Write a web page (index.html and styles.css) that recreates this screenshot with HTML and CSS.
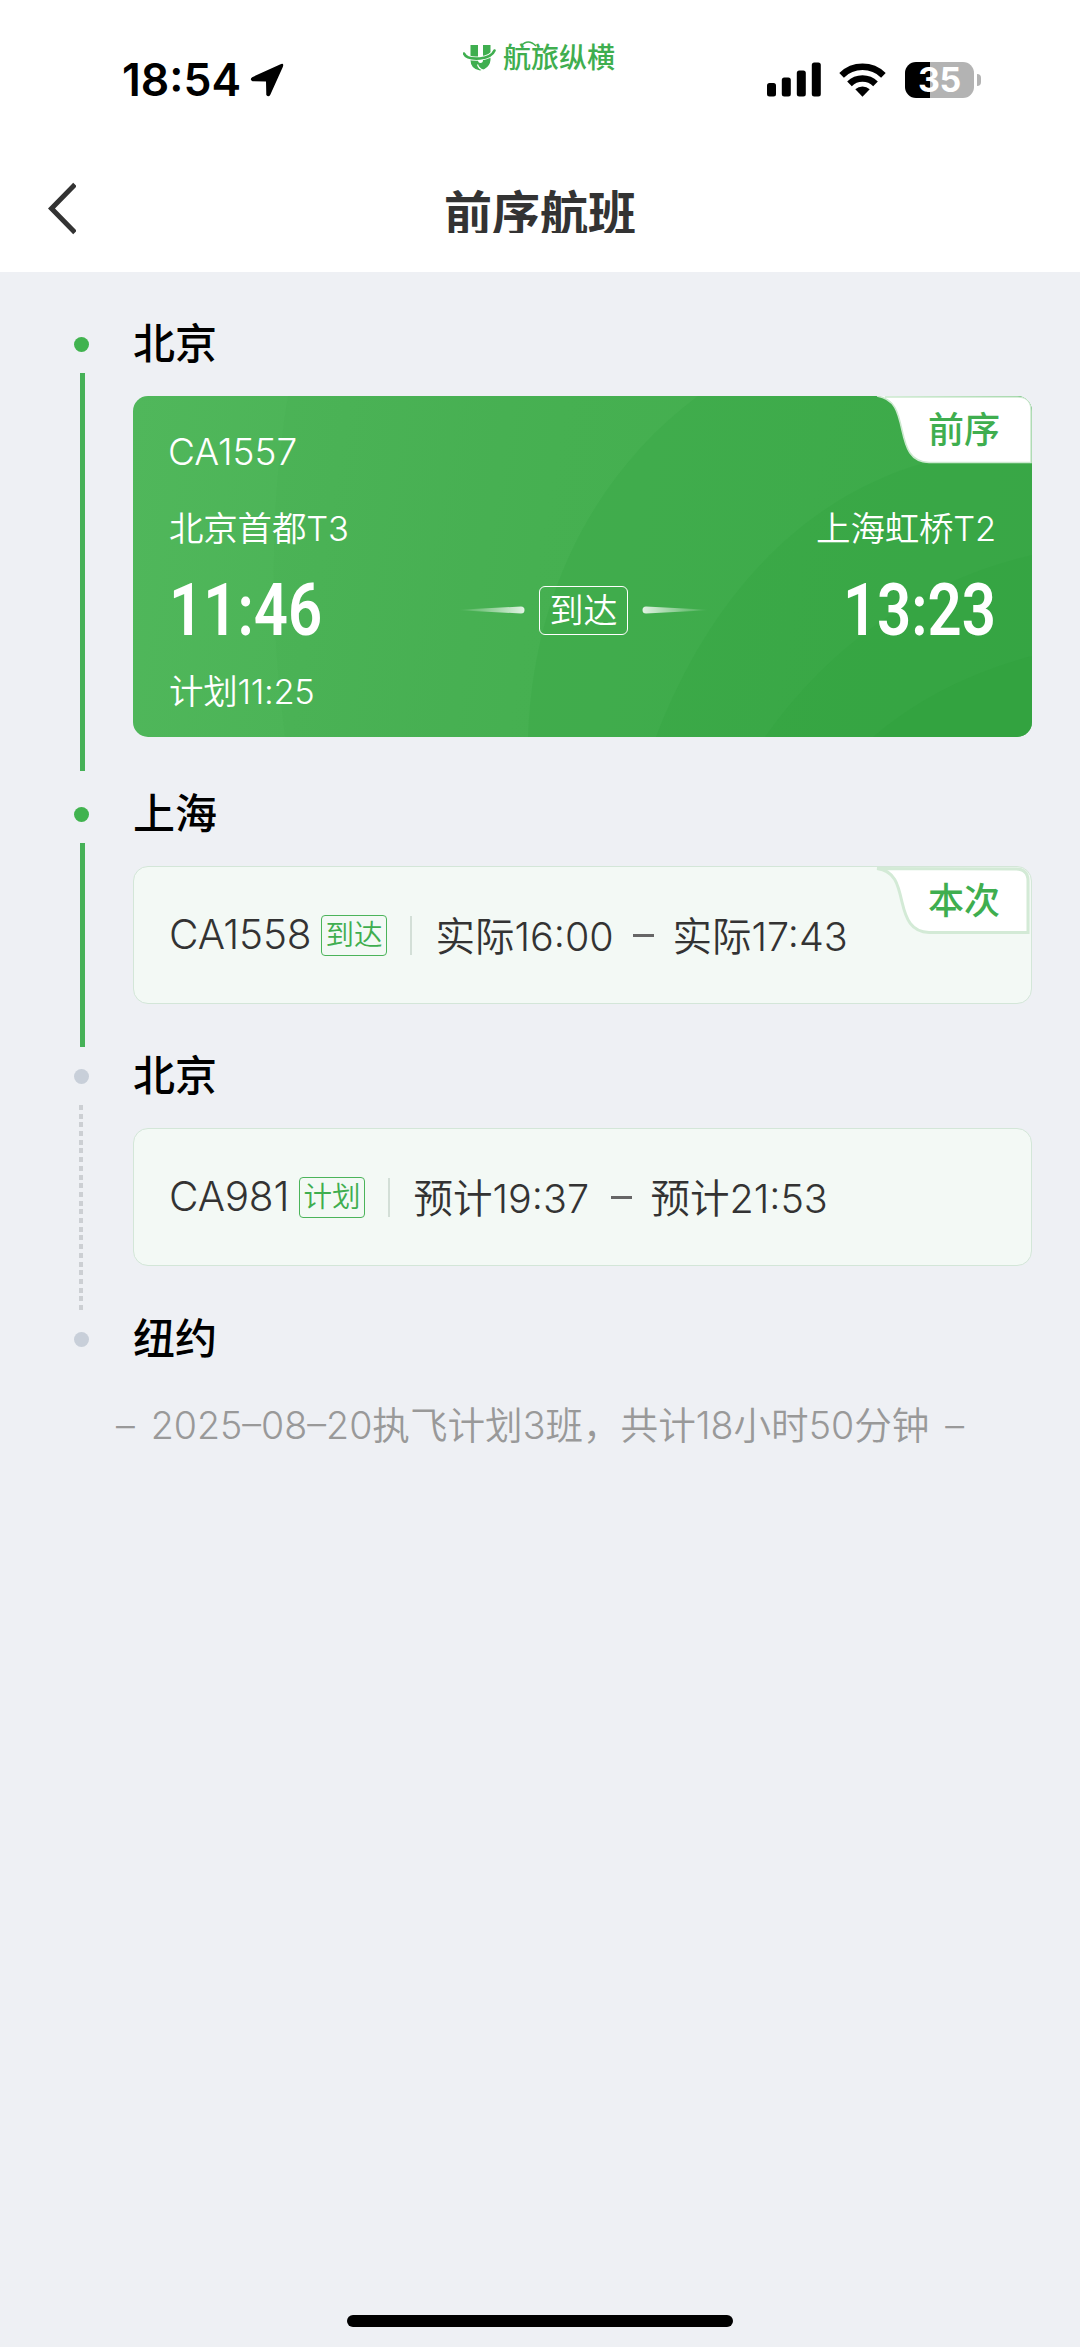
FILE: index.html
```html
<!DOCTYPE html>
<html lang="zh-CN">
<head>
<meta charset="utf-8">
<title>前序航班</title>
<link rel="stylesheet" href="styles.css">
</head>
<body>
<div class="screen">
  <header class="top">
    <div class="statusbar">
      <div class="clock"><span class="clock-time">18:54</span>
        <svg class="loc" width="36" height="36" viewBox="0 0 36 36"><path d="M3.2 15.2 31 2.4Q35.500 .5 33.800 5L21.300 32.800Q19.500 35.800 17.300 33L17 19.500 3.500 19.200Q.2 17.500 3.200 15.200Z"/></svg>
      </div>
      <div class="brand">
        <svg width="33" height="28" viewBox="0 0 33 28" fill="none"><path d="M7.500 1H15V16Q15 19 17.500 19T20 16V1H27.500V16Q27 22 21.500 25L17 26.500Q7.500 25 7.500 16Z" fill="#3fae4f"/><path d="M1 9.500Q3 15.500 17 14.500 29 13 31.500 6.500" stroke="#fff" stroke-width="4.400"/><path d="M1 9.500Q3 15.500 17 14.500 29 13 31.500 6.500" stroke="#3fae4f" stroke-width="2.600" stroke-linecap="round"/><path d="M14.500 20.500Q16 25 20 26" stroke="#fff" stroke-width="1.200"/></svg>
        <span class="brand-name">航旅纵横<svg class="brand-arc" width="18" height="8" viewBox="0 0 18 8" fill="none"><path d="M1 6Q8-2 16 6" stroke="#3fae4f" stroke-width="1.600"/></svg></span>
      </div>
      <div class="indicators">
        <svg width="54" height="36" viewBox="0 0 54 36"><rect x="0" y="21" width="9" height="13.500" rx="2.500"/><rect x="14.800" y="15.500" width="9" height="19" rx="2.500"/><rect x="29.800" y="8.500" width="9" height="26" rx="2.500"/><rect x="44.800" y=".5" width="9" height="34" rx="2.500"/></svg>
        <svg class="wifi" width="47" height="36" viewBox="0 0 47 36" fill="none" stroke="#000" stroke-width="6.600"><path d="M2.600 13.300A30 30 0 0 1 44.400 13.300"/><path d="M10.500 21.800A18.500 18.500 0 0 1 36.500 21.800"/><path d="M23.500 34.800 16.300 27.300A11 11 0 0 1 30.700 27.300Z" fill="#000" stroke="none"/></svg>
        <div class="battery"><span>35</span></div><i class="battery-cap"></i>
      </div>
    </div>
    <nav class="navbar">
      <svg class="back" width="30" height="54" viewBox="0 0 30 54" fill="none"><path d="M29 2.500 5.500 26.500 29 50.500" stroke="#333" stroke-width="5"/></svg>
      <h1 class="title">前序航班</h1>
    </nav>
  </header>

  <main class="timeline">
    <section class="step step-tall">
      <div class="rail"><i class="dot on"></i><i class="line"></i></div>
      <div class="body">
        <h2 class="city">北京</h2>
        <article class="hero">
          <svg class="arcs" width="899" height="341" viewBox="0 0 899 341" preserveAspectRatio="none">
            <path d="M155 0Q128 160 152 341H899V0Z" fill="#2e9f3a" fill-opacity=".05"/>
            <path d="M395 341C400 190 468 72 565 0H899V341Z" fill="#2e9f3a" fill-opacity=".2"/>
            <path d="M523 341C575 205 665 105 787 68H899V341Z" fill="#2e9f3a" fill-opacity=".22"/>
            <path d="M632 341C700 245 790 185 899 159V341Z" fill="#2e9f3a" fill-opacity=".22"/>
            <path d="M740 341Q805 285 899 260V341Z" fill="#2e9f3a" fill-opacity=".32"/>
          </svg>
          <div class="tab">
            <svg width="161" height="70" viewBox="0 0 161 70"><path d="M6 0C24 3 27 16 31 34 35 52 39 66 58 66.500H160V14Q160 1 147 1L6 0Z" fill="#fff"/><path d="M6 0C24 3 27 16 31 34 35 52 39 66 58 66.500H160V14Q160 1 147 1H14" fill="none" stroke="#cde9d0" stroke-width="1.600"/></svg>
            <span class="tab-label">前序</span>
          </div>
          <div class="hero-no">CA1557</div>
          <div class="hero-row hero-places"><span>北京首都T3</span><span>上海虹桥T2</span></div>
          <div class="hero-row hero-times">
            <b class="time">11:46</b>
            <div class="state">
              <svg width="66" height="8" viewBox="0 0 66 8"><defs><linearGradient id="a"><stop stop-color="#fff" stop-opacity="0"/><stop offset="1" stop-color="#fff" stop-opacity=".85"/></linearGradient></defs><path d="M0 3.800 62 .5Q65.500.5 65.500 4T62 7.500L0 4.200Z" fill="url(#a)"/></svg>
              <span class="state-label">到达</span>
              <svg width="66" height="8" viewBox="0 0 66 8"><defs><linearGradient id="b"><stop stop-color="#fff" stop-opacity=".85"/><stop offset="1" stop-color="#fff" stop-opacity="0"/></linearGradient></defs><path d="M66 3.800 4 .5Q.5.5.5 4T4 7.500L66 4.200Z" fill="url(#b)"/></svg>
            </div>
            <b class="time time-end">13:23</b>
          </div>
          <div class="hero-plan">计划11:25</div>
        </article>
      </div>
    </section>

    <section class="step">
      <div class="rail"><i class="dot on"></i><i class="line"></i></div>
      <div class="body">
        <h2 class="city">上海</h2>
        <article class="card">
          <div class="tab tab-soft">
            <svg width="161" height="70" viewBox="0 0 161 70"><path d="M6 1.500C24 4 27 17 31 35 35 52 40 65 58 65.500H157V14Q157 2 145 2Z" fill="#fff" stroke="#d3ead6" stroke-width="3"/></svg>
            <span class="tab-label">本次</span>
          </div>
          <span class="no no-a">CA1558</span><span class="badge">到达</span><i class="sep"></i>
          <span class="t">实际16:00</span><i class="dash"></i><span class="t">实际17:43</span>
        </article>
      </div>
    </section>

    <section class="step">
      <div class="rail"><i class="dot"></i><i class="line dotted"></i></div>
      <div class="body">
        <h2 class="city">北京</h2>
        <article class="card">
          <span class="no no-b">CA981</span><span class="badge">计划</span><i class="sep"></i>
          <span class="t">预计19:37</span><i class="dash"></i><span class="t">预计21:53</span>
        </article>
      </div>
    </section>

    <section class="step step-last">
      <div class="rail"><i class="dot"></i></div>
      <div class="body"><h2 class="city">纽约</h2></div>
    </section>
    <p class="summary"><span>–</span><span class="summary-text">2025–08–20执飞计划3班，共计18小时50分钟</span><span>–</span></p>
  </main>
  <div class="home"></div>
</div>
</body>
</html>
```
FILE: styles.css
```css
* { box-sizing: border-box; }
body { margin: 0; background: #eef0f4; font-family: Inter, "Noto Sans CJK SC", sans-serif; color: #333; }
i { font-style: normal; display: block; }
h1, h2, p { margin: 0; }
svg { display: block; flex: none; }

.screen { width: 1080px; height: 2347px; display: flex; flex-direction: column; overflow: hidden; }

.top { height: 272px; background: #fff; }
.statusbar { height: 132px; display: grid; grid-template-columns: 463px 153px 1fr; align-items: start; }
.clock { display: flex; padding: 53px 0 0 122px; color: #000; }
.clock-time { width: 127px; font-size: 44.500px; font-weight: 600; line-height: 54px; white-space: nowrap; }
.loc { margin-top: 9px; }
.brand { display: flex; align-items: center; padding-top: 40px; gap: 7px; }
.brand-name { position: relative; font-size: 28px; line-height: 36px; font-weight: 500; color: #3fae4f; white-space: nowrap; }
.brand-arc { position: absolute; left: 17px; top: 0; }
.indicators { display: flex; padding: 61.500px 0 0 150.500px; }
.wifi { margin: 0 19px 0 18px; }
.battery { width: 69px; height: 36px; border-radius: 11px; background: linear-gradient(90deg, #000 25px, #b3b3b3 25px); color: #fff; font-size: 34px; line-height: 36px; font-weight: 700; padding-left: 13.500px; letter-spacing: -.5px; }
.battery-cap { width: 4px; height: 12px; margin: 12px 0 0 3px; border-radius: 0 5px 5px 0; background: #b3b3b3; }

.navbar { display: grid; grid-template-columns: 200px 1fr 200px; padding-top: 50px; }
.back { margin-left: 46px; }
.title { height: 51px; overflow: hidden; text-align: center; font-size: 48px; line-height: 64px; font-weight: 700; color: #333; }

.timeline { flex: 1; padding: 48px 48px 0 73px; }
.step { display: grid; grid-template-columns: 60px 1fr; height: 262.300px; }
.step-tall { height: 470px; }
.step-last { height: 80px; }
.rail { display: flex; flex-direction: column; padding: 17px 0 5px .5px; }
.step-tall .rail { padding-bottom: 19px; }
.dot { width: 15px; height: 15px; border-radius: 50%; background: #c8cfd9; flex: none; }
.dot.on { background: #41b34f; }
.line { width: 5px; flex: 1; margin: 21px 0 0 6px; background: #46b157; }
.line.dotted { width: 4px; background: repeating-linear-gradient(180deg, #cccfd3 0 5px, transparent 5px 8.700px); margin-left: 5.500px; }
.city { font-size: 42px; line-height: 47px; height: 44px; font-weight: 500; color: #000; margin-bottom: 32px; }

.hero { position: relative; height: 341px; border-radius: 15px; overflow: hidden; color: #fff; padding: 36px 36px 0; background: linear-gradient(100deg, #50b75b, #48b153 45%, #42ad4e); font-size: 34.500px; font-weight: 350; }
.arcs { position: absolute; inset: 0; }
.hero > div { position: relative; }
.hero > .tab, .tab { position: absolute; right: 0; top: 0; }
.tab-label { position: absolute; left: 57px; top: 13px; font-size: 36px; line-height: 42px; font-weight: 500; color: #3fae4f; white-space: nowrap; }
.hero-no { font-size: 37px; line-height: 40px; margin-left: -1px; }
.hero-row { display: flex; justify-content: space-between; align-items: center; }
.hero-places { margin-top: 32px; line-height: 50px; letter-spacing: -.2px; }
.hero-times { height: 78px; margin-top: 17px; }
.time { display: block; width: 152px; font: 600 73px/78px Roboto, sans-serif; transform: scaleX(.82); transform-origin: 0 50%; white-space: nowrap; }
.time-end { display: flex; justify-content: flex-end; transform-origin: 100% 50%; }
.state { display: flex; align-items: center; gap: 14px; padding-left: 2px; }
.state-label { width: 89px; height: 49px; border: 1.500px solid #fff; border-radius: 6px; line-height: 47px; text-align: center; font-size: 34px; }
.hero-plan { margin-top: 18px; line-height: 50px; letter-spacing: -.3px; }

.card { position: relative; height: 138px; border: 1.500px solid #d3e6d8; border-radius: 15px; background: #f3f9f5; display: flex; align-items: center; padding-left: 35px; font-size: 39.500px; font-weight: 350; color: #333; white-space: nowrap; }
.no { font-size: 40.500px; letter-spacing: -.2px; margin-top: -2px; }
.badge { width: 66px; height: 41px; border: 1.500px solid #4bb45a; border-radius: 4px; color: #3fae4f; font-size: 28.500px; line-height: 38px; text-align: center; }
.no-a { width: 152px; }
.no-b { width: 130px; }
.sep { width: 1.500px; height: 39px; margin: 0 24px 0 23px; background: #d3dfd7; }
.t { width: 177px; margin-top: -4px; }
.dash { width: 21px; height: 3px; background: #666; margin: 0 19px 0 20px; }

.tab-soft { right: -1px; top: -.5px; }
.summary { display: flex; justify-content: space-between; width: 848px; margin-left: 43px; font-size: 37.600px; line-height: 61px; font-weight: 350; color: #999; white-space: nowrap; }
.home { width: 386px; height: 12px; border-radius: 6px; background: #000; margin: 0 auto 20px; flex: none; }
```
